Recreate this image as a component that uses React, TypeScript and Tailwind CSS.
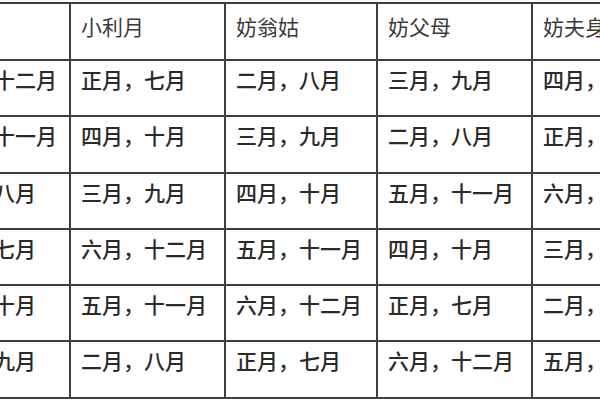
const headers = ["大利月", "小利月", "妨翁姑", "妨父母", "妨夫身"]

const rows = [
    ["六月，十二月", "正月，七月", "二月，八月", "三月，九月", "四月，十月"],
    ["五月，十一月", "四月，十月", "三月，九月", "二月，八月", "正月，七月"],
    ["二月，八月", "三月，九月", "四月，十月", "五月，十一月", "六月，十二月"],
    ["正月，七月", "六月，十二月", "五月，十一月", "四月，十月", "三月，九月"],
    ["四月，十月", "五月，十一月", "六月，十二月", "正月，七月", "二月，八月"],
    ["三月，九月", "二月，八月", "正月，七月", "六月，十二月", "五月，十一月"],
]

const App = () => {
    return (
        <div className="w-[600px] h-[400px] overflow-hidden bg-white" style={{ fontFamily: '"Noto Sans CJK SC", "Noto Sans", sans-serif' }}>
            <div className="-ml-[86px] mt-[2px] w-[770px] grid grid-cols-[153px_153px_150px_153px_153px] grid-rows-[55px_54px_55px_54px_54px_54px_55px] gap-[2px] p-[2px] bg-[#404040]">
                {headers.map((h, i) => (
                    <div key={h} className="bg-white pl-[10px] pt-[12px] text-[21px] leading-none text-[#3a3a3a] whitespace-nowrap">
                        {i === 0 ? "" : h}
                    </div>
                ))}
                {rows.map((row, r) =>
                    row.map((cell, c) => (
                        <div key={`${r}-${c}`} className={`bg-white pt-[8px] text-[21px] leading-none font-medium text-[#2a2a2a] whitespace-nowrap ${c === 0 ? "pl-[15px]" : "pl-[10px]"}`}>
                            {cell}
                        </div>
                    ))
                )}
            </div>
        </div>
    )
}

export default App
